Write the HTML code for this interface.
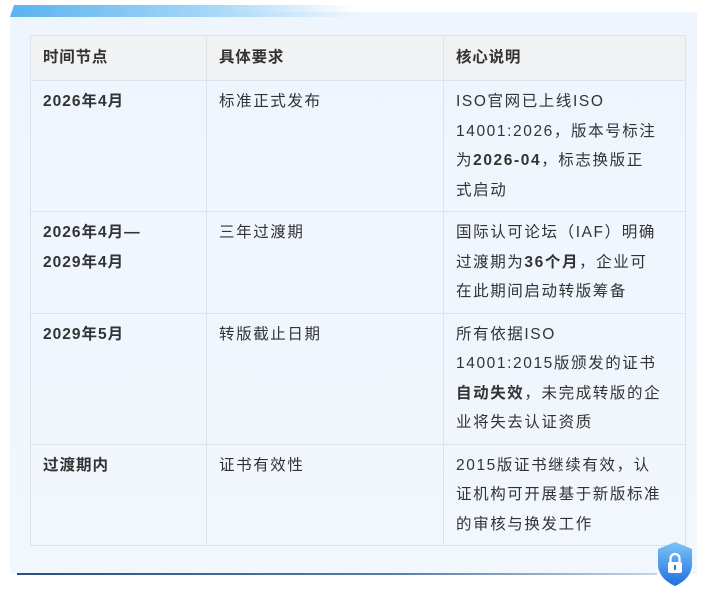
<!DOCTYPE html>
<html><head><meta charset="utf-8"><style>
body{margin:0;width:705px;height:613px;background:#fff;position:relative;overflow:hidden;font-family:"Liberation Sans","Noto Sans CJK SC",sans-serif;color:#333}
.card{position:absolute;left:10px;top:12px;width:687px;height:562px;background:linear-gradient(180deg,#eef5fd,#f2f7fd);}
.strip{position:absolute;left:10px;top:5px;width:345px;height:12px;background:linear-gradient(90deg,#5bb3f0,#a8d8f8 60%,rgba(240,247,253,0));clip-path:polygon(4px 0,100% 0,100% 100%,0 100%)}
.bl{position:absolute;left:17px;top:573px;width:640px;height:2px;background:linear-gradient(90deg,#2a4f80,#5a7eaa 60%,#c5d3e2)}
table{position:absolute;left:30px;top:35px;width:655px;border-collapse:collapse;font-size:15.5px;letter-spacing:1.6px;table-layout:fixed}
td,th{border:1px solid #dde3ea;vertical-align:top;text-align:left;padding:0 12px;line-height:29.5px;white-space:nowrap}
th{background:#f1f2f4;height:44px;vertical-align:middle;font-weight:bold;font-size:15.5px;letter-spacing:0.8px}
td{padding-top:6px;padding-bottom:6px}
td:first-child{font-weight:bold;letter-spacing:1px}
b{font-weight:bold}
</style></head><body>
<div class="card"></div><div class="strip"></div>
<table>
<colgroup><col style="width:176px"><col style="width:237px"><col style="width:242px"></colgroup>
<tr><th>时间节点</th><th>具体要求</th><th>核心说明</th></tr>
<tr style="height:131px"><td>2026年4月</td><td>标准正式发布</td><td>ISO官网已上线ISO<br>14001:2026，版本号标注<br>为<b>2026-04</b>，标志换版正<br>式启动</td></tr>
<tr style="height:101px"><td>2026年4月—<br>2029年4月</td><td>三年过渡期</td><td>国际认可论坛（IAF）明确<br>过渡期为<b>36个月</b>，企业可<br>在此期间启动转版筹备</td></tr>
<tr style="height:130px"><td>2029年5月</td><td>转版截止日期</td><td>所有依据ISO<br>14001:2015版颁发的证书<br><b>自动失效</b>，未完成转版的企<br>业将失去认证资质</td></tr>
<tr style="height:101px"><td>过渡期内</td><td>证书有效性</td><td>2015版证书继续有效，认<br>证机构可开展基于新版标准<br>的审核与换发工作</td></tr>
</table>
<div class="bl"></div>
<svg style="position:absolute;left:654px;top:540px" width="42" height="48" viewBox="0 0 42 48">
<defs><linearGradient id="g" x1="0" y1="0" x2="0" y2="1"><stop offset="0" stop-color="#7cc4f8"/><stop offset="1" stop-color="#1f6fe0"/></linearGradient></defs>
<path d="M21 2 L38 9 V24 C38 35 30 42 21 46 C12 42 4 35 4 24 V9 Z" fill="url(#g)"/>
<rect x="14" y="22" width="14" height="11" rx="2" fill="#fff"/>
<path d="M16.5 22 V18.5 a4.5 4.5 0 0 1 9 0 V22" stroke="#fff" stroke-width="2.2" fill="none"/>
<rect x="20" y="25" width="2" height="5" fill="#2a7ae4"/>
</svg>
</body></html>
